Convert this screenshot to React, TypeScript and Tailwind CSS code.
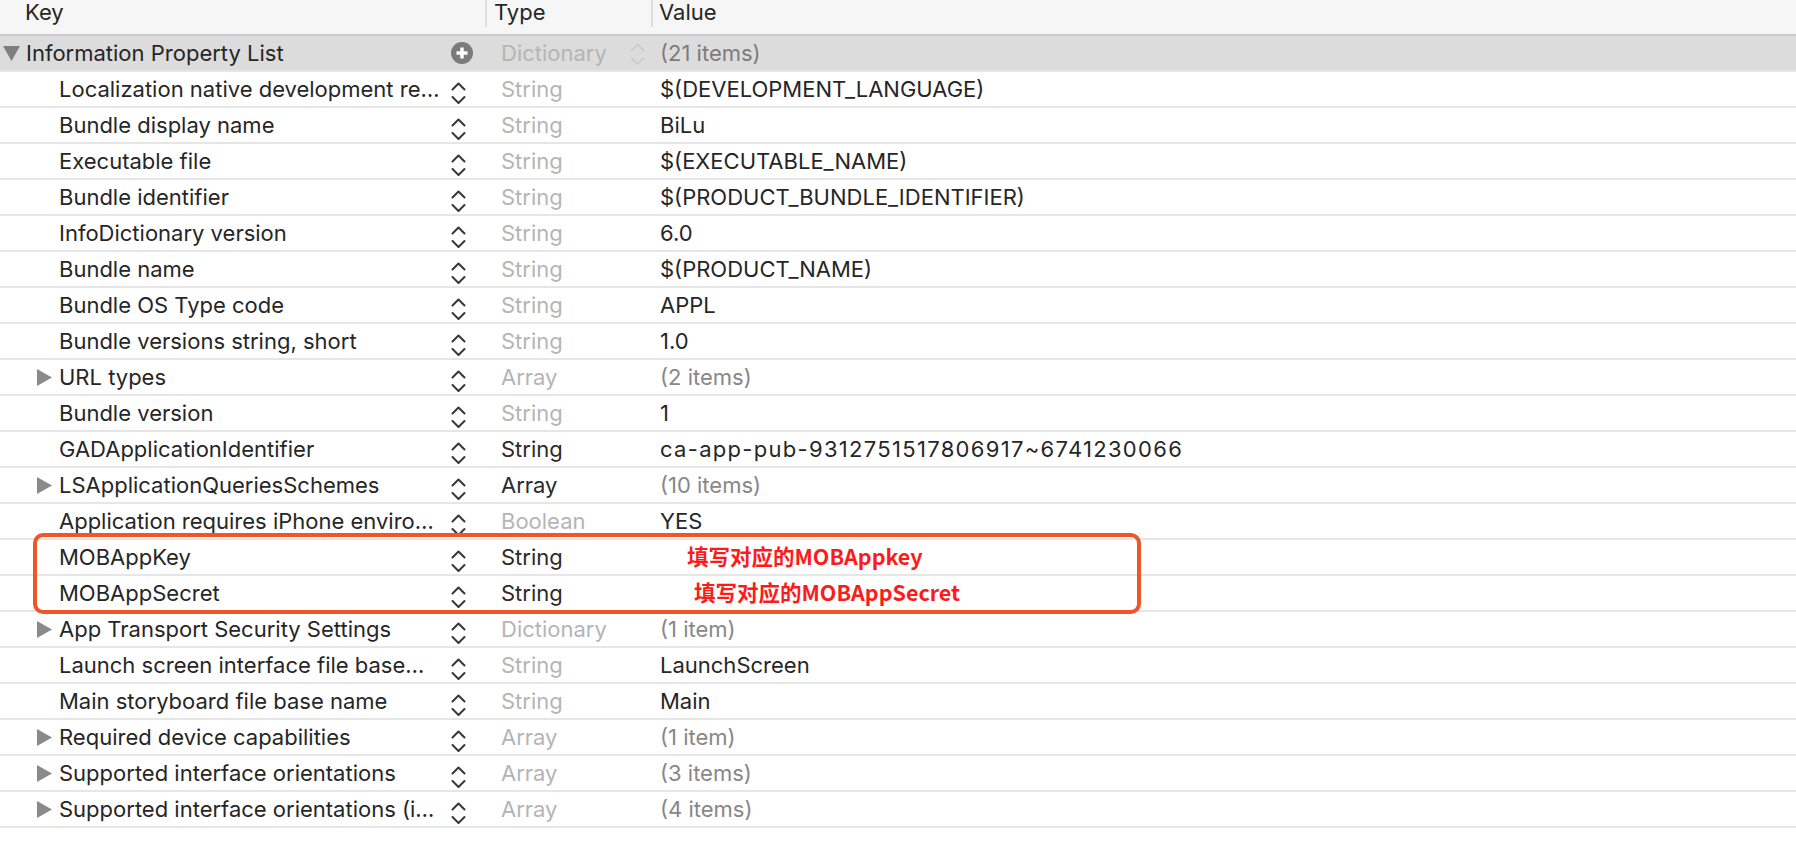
import React from "react";

type Row = {
  key: string;
  type: string;
  value: string;
  typeDark?: boolean;
  valueGray?: boolean;
  tri?: boolean;
  note?: string;
  noteX?: number;
  wide?: boolean;
};

const rows: Row[] = [
  { key: "Localization native development re…", type: "String", value: "$(DEVELOPMENT_LANGUAGE)" },
  { key: "Bundle display name", type: "String", value: "BiLu" },
  { key: "Executable file", type: "String", value: "$(EXECUTABLE_NAME)" },
  { key: "Bundle identifier", type: "String", value: "$(PRODUCT_BUNDLE_IDENTIFIER)" },
  { key: "InfoDictionary version", type: "String", value: "6.0" },
  { key: "Bundle name", type: "String", value: "$(PRODUCT_NAME)" },
  { key: "Bundle OS Type code", type: "String", value: "APPL" },
  { key: "Bundle versions string, short", type: "String", value: "1.0" },
  { key: "URL types", type: "Array", value: "(2 items)", valueGray: true, tri: true },
  { key: "Bundle version", type: "String", value: "1" },
  {
    key: "GADApplicationIdentifier",
    type: "String",
    value: "ca-app-pub-9312751517806917~6741230066",
    typeDark: true,
    wide: true,
  },
  { key: "LSApplicationQueriesSchemes", type: "Array", value: "(10 items)", valueGray: true, tri: true, typeDark: true },
  { key: "Application requires iPhone enviro…", type: "Boolean", value: "YES" },
  { key: "MOBAppKey", type: "String", value: "", typeDark: true, note: "填写对应的MOBAppkey", noteX: 1 },
  { key: "MOBAppSecret", type: "String", value: "", typeDark: true, note: "填写对应的MOBAppSecret", noteX: 2 },
  { key: "App Transport Security Settings", type: "Dictionary", value: "(1 item)", valueGray: true, tri: true },
  { key: "Launch screen interface file base…", type: "String", value: "LaunchScreen" },
  { key: "Main storyboard file base name", type: "String", value: "Main" },
  { key: "Required device capabilities", type: "Array", value: "(1 item)", valueGray: true, tri: true },
  { key: "Supported interface orientations", type: "Array", value: "(3 items)", valueGray: true, tri: true },
  { key: "Supported interface orientations (i…", type: "Array", value: "(4 items)", valueGray: true, tri: true },
];

const font = { fontFamily: "Inter, 'Noto Sans', sans-serif" };

function Stepper({ light }: { light?: boolean }) {
  return (
    <svg width="15" height="23" viewBox="0 0 15 23" className="shrink-0">
      <polyline
        points="1.5,7.5 7.5,1.5 13.5,7.5"
        fill="none"
        stroke={light ? "#c9c9c9" : "#3a3a3a"}
        strokeWidth={light ? 1.6 : 2.1}
        strokeLinecap="round"
        strokeLinejoin="round"
      />
      <polyline
        points="1.5,15 7.5,21 13.5,15"
        fill="none"
        stroke={light ? "#c9c9c9" : "#3a3a3a"}
        strokeWidth={light ? 1.6 : 2.1}
        strokeLinecap="round"
        strokeLinejoin="round"
      />
    </svg>
  );
}

function TriRight() {
  return (
    <svg width="15" height="17" viewBox="0 0 15 17" className="shrink-0">
      <polygon points="0,0 15,8.5 0,17" fill="#8a8a8a" />
    </svg>
  );
}

function TriDown() {
  return (
    <svg width="17" height="15" viewBox="0 0 17 15" className="shrink-0">
      <polygon points="0,0 17,0 8.5,15" fill="#7f7f7f" />
    </svg>
  );
}

function PlusCircle() {
  return (
    <svg width="22" height="22" viewBox="0 0 22 22" className="shrink-0">
      <circle cx="11" cy="11" r="11" fill="#7b7b7b" />
      <rect x="5.5" y="9.3" width="11" height="3.4" fill="#fff" />
      <rect x="9.3" y="5.5" width="3.4" height="11" fill="#fff" />
    </svg>
  );
}

export default function App() {
  return (
    <div className="relative w-[1796px] h-[841px] bg-white overflow-hidden text-[22px] text-[#262626]" style={font}>
      {/* header */}
      <div className="flex h-[36px] bg-[#f6f6f6] border-b-2 border-[#cbcbcb]">
        <div className="relative w-[487px] pl-[25px] leading-[22px] pt-[1px]">
          Key
          <div className="absolute right-0 top-0 h-[27px] w-[2px] bg-[#dedede]" />
        </div>
        <div className="relative w-[166px] pl-[7px] leading-[22px] pt-[1px]">
          Type
          <div className="absolute right-0 top-0 h-[27px] w-[2px] bg-[#dedede]" />
        </div>
        <div className="pl-[6px] leading-[22px] pt-[1px]">Value</div>
      </div>

      {/* root row */}
      <div className="flex h-[36px] bg-[#dcdcdc] border-b-2 border-[#e6e6e6] items-center">
        <div className="flex w-[487px] items-center">
          <div className="flex flex-1 items-center pl-[3px] gap-[6px] min-w-0 whitespace-nowrap">
            <TriDown />
            <span>Information Property List</span>
          </div>
          <div className="mr-[14px] flex items-center">
            <PlusCircle />
          </div>
        </div>
        <div className="flex w-[166px] items-center pl-[14px] pr-[8px]">
          <span className="flex-1 text-[#b5b5b5]">Dictionary</span>
          <div className="mt-[2px]">
            <Stepper light />
          </div>
        </div>
        <div className="pl-[7px] text-[#7c7c7c]">(21 items)</div>
      </div>

      {rows.map((r, i) => (
        <div key={i} className="flex h-[36px] border-b-2 border-[#e6e6e6] items-center">
          <div className="flex w-[487px] items-center">
            <div
              className={
                "flex flex-1 items-center min-w-0 whitespace-nowrap gap-[7px] " +
                (r.tri ? "pl-[37px]" : "pl-[59px]")
              }
            >
              {r.tri && <TriRight />}
              <span>{r.key}</span>
            </div>
            <div className="mr-[21px] mt-[8px] flex items-center">
              <Stepper />
            </div>
          </div>
          <div className={"w-[166px] pl-[14px] " + (r.typeDark ? "text-[#2a2a2a]" : "text-[#b5b5b5]")}>{r.type}</div>
          <div
            className={
              "pl-[7px] whitespace-nowrap " +
              (r.valueGray ? "text-[#878787]" : "text-[#262626]") +
              (r.wide ? " tracking-[1.3px]" : "")
            }
          >
            {r.note ? (
              <span
                className={
                  "font-bold text-[#ff1a1a] text-[21.5px] tracking-normal " +
                  (r.noteX === 1 ? "ml-[27px]" : "ml-[34px]")
                }
                style={{ fontFamily: "'Noto Sans CJK SC', 'Noto Sans', sans-serif" }}
              >
                {r.note}
              </span>
            ) : (
              r.value
            )}
          </div>
        </div>
      ))}

      {/* red annotation box */}
      <div className="absolute left-[33px] top-[533px] w-[1108px] h-[81px] border-[4px] border-[#ef5628] rounded-[10px]" />
    </div>
  );
}
